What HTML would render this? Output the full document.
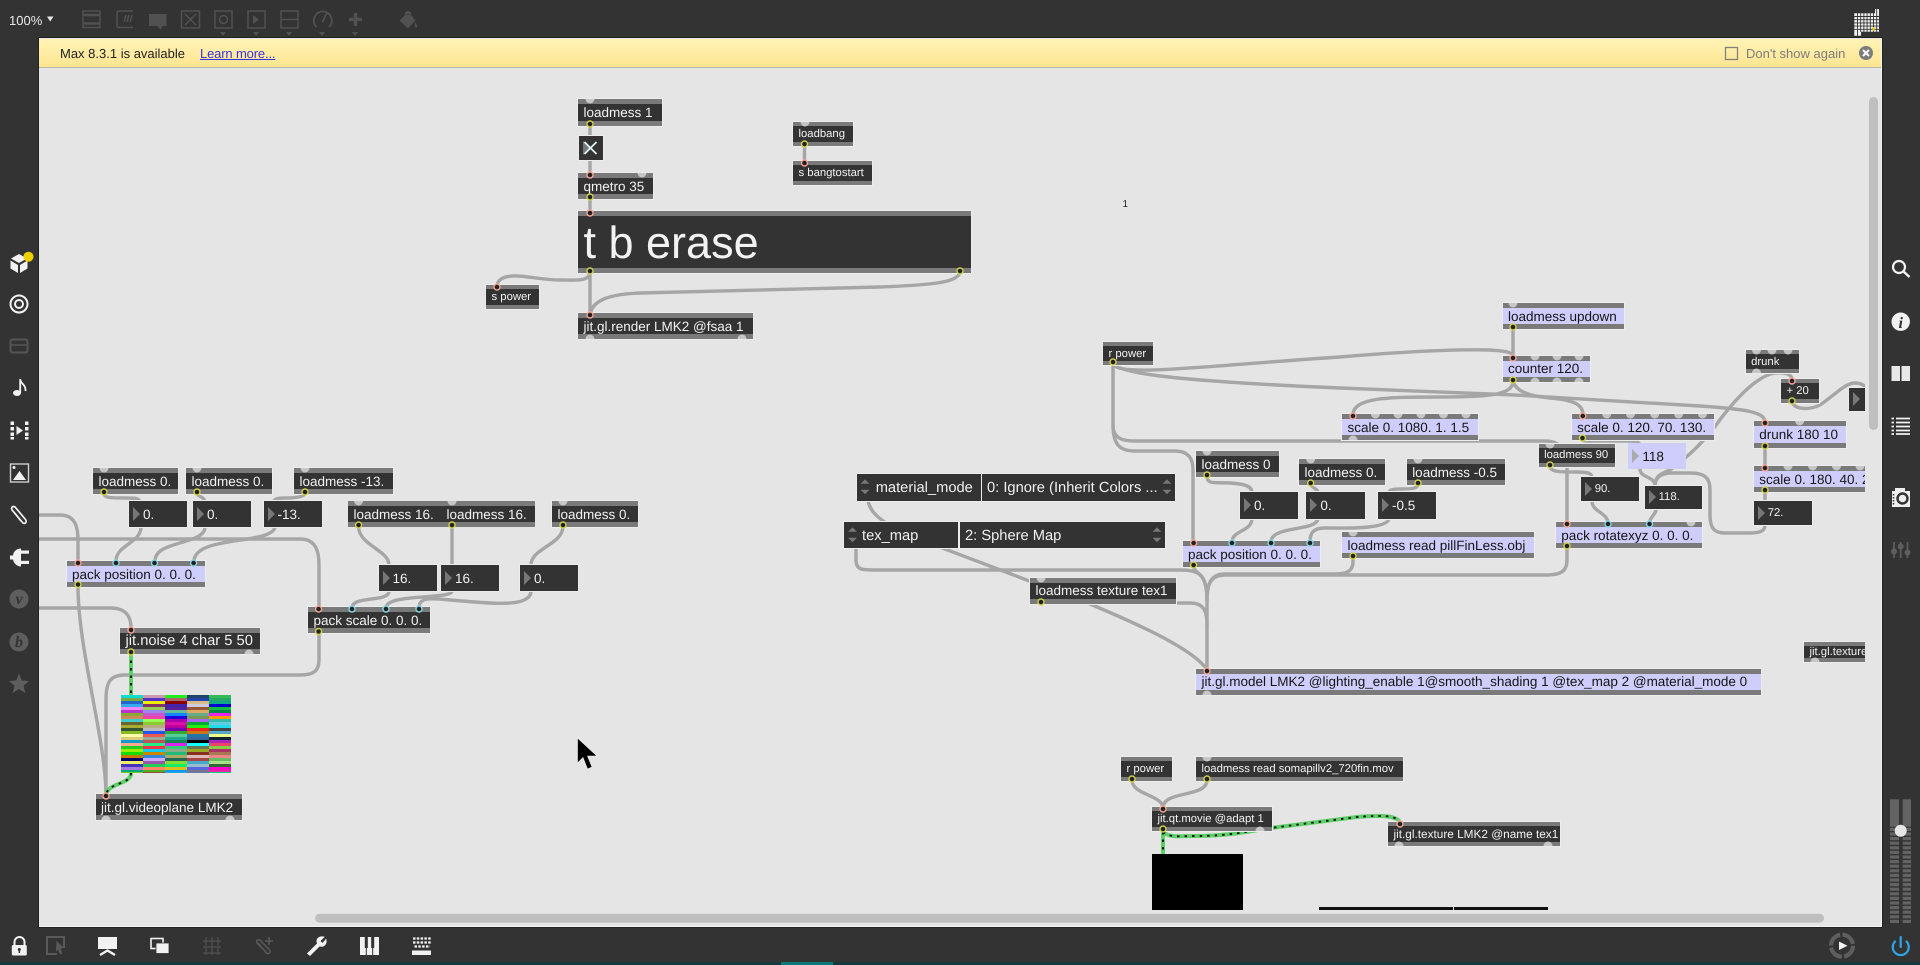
<!DOCTYPE html>
<html><head><meta charset="utf-8"><title>Max patcher</title>
<style>
html,body{margin:0;padding:0;width:1920px;height:965px;overflow:hidden;background:#333;font-family:"Liberation Sans",Arial,sans-serif;text-rendering:geometricPrecision}
#pat{position:absolute;left:39px;top:38px;width:1842px;height:888px;background:#e5e5e5;border-right:1px solid #f4f4f4;border-bottom:1px solid #f4f4f4;box-shadow:0 0 0 1px #222}
#bar{position:absolute;left:39px;top:39px;width:1842px;height:28px;background:linear-gradient(#fff3b6,#fde590);border-bottom:1px solid #b9b9a8;font-size:13px;color:#222;line-height:28px}
#bar span{position:absolute;top:1px;white-space:nowrap}
#clip{position:absolute;left:0;top:0;width:1920px;height:965px;clip-path:inset(68px 55px 55px 39px)}
svg.l{position:absolute;left:0;top:0;width:1920px;height:965px;overflow:visible}
.o,.n,.u{position:absolute;box-sizing:border-box;background:#333;color:#f2f2f2;white-space:nowrap;overflow:hidden;display:flex;align-items:center;box-shadow:0 0 0 1px #ececec;font-size:13.5px}
.o{border-top:5px solid #7a7a7a;border-bottom:5px solid #7a7a7a;padding-left:5.5px}
.s{font-size:11.3px;border-top-width:4.5px;border-bottom-width:4.5px}
.v{background:#cfcdfb;color:#151515}
.n{padding-left:14px}
.n::before{content:"";position:absolute;left:4px;top:50%;margin-top:-7px;border-left:7.5px solid #777;border-top:7px solid transparent;border-bottom:7px solid transparent}
.n.v::before{border-left-color:#aaa}
.u{font-size:14.7px}
.u b{font-weight:normal;position:absolute;margin-top:2px}
.w{fill:none;stroke:#a6a6a6;stroke-width:3.4;stroke-linecap:round}
.gb{fill:none;stroke:#5fd068;stroke-width:4}
.gd{fill:none;stroke:#111;stroke-width:1.9;stroke-dasharray:2.5 5}
#noise{position:absolute;left:120.5px;top:695px;width:110.5px;height:77.5px;display:grid;grid-template-columns:repeat(5,1fr);grid-template-rows:repeat(26,1fr)}
#noise i{display:block}
</style></head><body>
<div id="pat"></div>
<div id="bar"><span style="left:21px">Max 8.3.1 is available</span><span style="left:161px;color:#3a32e0;text-decoration:underline;letter-spacing:-.15px">Learn more...</span><span style="left:1707px;color:#7c7c7c">Don't show again</span></div>

<div id="clip">
<svg class="l">
<g class="w">
<path d="M590 126V173M590 199V211M804.5 146V161"/>
<path d="M590 272C590 282 575 280 560 280C540 280 525 275 512 276C502 277 497 280 497 287"/>
<path d="M590 272V314"/>
<path d="M960 272C958 283 930 285 880 287L640 293C610 294 592 300 590 315"/>
<path d="M104 493C104 498 110 498 125 498C136 498 140 498 140 503"/>
<path d="M197 493C197 497 205 496 205 503"/>
<path d="M305 493C305 497 295 498 285 498C277 498 274 499 273 503"/>
<path d="M141 527C141 543 116 545 116 561"/>
<path d="M205 527C205 545 155 540 155 561"/>
<path d="M275 527C272 545 195 535 194 561"/>
<path d="M30 515L60 515C74 515 78 525 78 540L78 561"/>
<path d="M30 539L300 539C315 539 319 550 319 565L319 607"/>
<path d="M30 608L110 608C125 608 131 615 131 628"/>
<path d="M358.600 526C358 545 389 550 389 565"/>
<path d="M452 526V565"/>
<path d="M563 526C563 545 531 548 531 565"/>
<path d="M389 591C389 603 352 595 352 608"/>
<path d="M452 591C452 600 386 593 386 608"/>
<path d="M531 591C531 610 480 602 450 600C430 598 419 597 419 608"/>
<path d="M319 632L319 660C319 672 312 675 300 675L125 675C110 675 106 682 106 700L106 795"/>
<path d="M78 586C78 650 106 740 106 796"/>
<path d="M1113 363C1115 378 1200 366 1340 357C1400 352 1450 349 1490 350C1505 351 1513 352 1513 357"/>
<path d="M1113 363C1118 375 1200 382 1340 388L1515 395L1700 406C1745 409 1765 412 1765 422"/>
<path d="M1113 363L1113 425C1113 437 1120 441 1135 441L1545 441C1560 441 1567 450 1567 465L1567 523"/>
<path d="M1113 425C1113 445 1120 451 1135 451L1175 451C1188 451 1193 458 1193 470L1193 542"/>
<path d="M1207 476C1207 485 1215 482 1230 483C1245 484 1252 486 1252 493"/>
<path d="M1310.700 484C1311 488 1318 488 1318 493"/>
<path d="M1418 484C1418 489 1410 489 1400 489C1392 489 1389 490 1389 493"/>
<path d="M1252 518C1252 532 1232 530 1232 542"/>
<path d="M1318 518C1318 532 1271 525 1271 542"/>
<path d="M1389 518C1389 530 1340 528 1325 528C1314 528 1310 532 1310 542"/>
<path d="M1193.600 566C1194 575 1207 570 1207 600L1207 670"/>
<path d="M856 548L856 560C856 570 862 570 875 570L1180 570C1200 570 1207 575 1207 600"/>
<path d="M868 500C870 515 885 522 900 532L1090 604C1140 625 1195 650 1207 670"/>
<path d="M1041 603L1190 603C1203 603 1207 610 1207 625"/>
<path d="M1353 557L1353 562C1353 572 1345 574 1335 574L1225 574C1212 574 1207 582 1207 600"/>
<path d="M1567 547L1567 560C1567 572 1560 575 1545 575L1225 575C1212 575 1207 582 1207 600"/>
<path d="M1513 328V356"/>
<path d="M1513 381C1513 395 1490 397 1440 397C1390 397 1353 397 1353 415"/>
<path d="M1513 381C1516 392 1530 396 1550 398C1575 400 1583 405 1583 415"/>
<path d="M1582 439C1582 442 1590 441 1600 441L1630 441C1638 441 1640 443 1640 446"/>
<path d="M1640 469C1640 478 1655 476 1655 486"/>
<path d="M1765 525C1765 531 1760 533 1750 533L1725 533C1714 533 1710 528 1710 515L1710 490C1710 478 1705 473 1690 473L1672 473C1660 473 1655 478 1655 486"/>
<path d="M1792 380C1792 374 1785 372 1775 373C1755 376 1730 405 1714 428C1700 445 1690 455 1670 470C1660 474 1655 476 1655 486"/>
<path d="M1656 509C1656 515 1650 516 1649.500 523"/>
<path d="M1550 466C1550 472 1560 472 1575 472C1588 472 1592 473 1592 478"/>
<path d="M1592 501C1592 512 1607 512 1608 523"/>
<path d="M1765 447V467M1765 491V501"/>
<path d="M1792 402C1795 410 1810 410 1820 405C1835 395 1845 383 1855 383C1862 383 1865 386 1865 388"/>
<path d="M1132 780C1132 795 1163 795 1163 808"/>
<path d="M1207 780C1207 798 1163 790 1163 808"/>
</g>
<g>
<path class="gb" d="M131 653V695M131 773C131 785 108 782 106 795"/><path class="gd" d="M131 653V695M131 773C131 785 108 782 106 795"/>
<path class="gb" d="M1163 832V856M1163 832C1170 838 1180 836 1195 836C1230 836 1250 831 1271 828L1357 817C1380 815 1398 815 1400 823"/>
<path class="gd" d="M1163 832V856M1163 832C1170 838 1180 836 1195 836C1230 836 1250 831 1271 828L1357 817C1380 815 1398 815 1400 823"/>
</g>
</svg>

<div class="o" style="left:578px;top:99px;width:84px;height:27px">loadmess 1</div>
<div class="n" style="left:578.500px;top:136px;width:24px;height:24px;padding:0"></div>
<div class="o" style="left:578px;top:173px;width:75px;height:26px">qmetro 35</div>
<div class="o" style="left:578px;top:211px;width:393px;height:62px;font-size:45px;padding-top:2px">t b erase</div>
<div class="o s" style="left:793px;top:122px;width:60px;height:24px">loadbang</div>
<div class="o s" style="left:793px;top:161px;width:79px;height:24px">s bangtostart</div>
<div class="o s" style="left:486px;top:285px;width:53px;height:24px">s power</div>
<div class="o" style="left:578px;top:313px;width:175px;height:26px">jit.gl.render LMK2 @fsaa 1</div>

<div class="o" style="left:93px;top:468px;width:85px;height:26px">loadmess 0.</div>
<div class="o" style="left:186px;top:468px;width:86px;height:26px">loadmess 0.</div>
<div class="o" style="left:294px;top:468px;width:99px;height:26px">loadmess -13.</div>
<div class="n" style="left:129px;top:501px;width:58px;height:26px">0.</div>
<div class="n" style="left:193px;top:501px;width:58px;height:26px">0.</div>
<div class="n" style="left:263.500px;top:501px;width:58px;height:26px">-13.</div>
<div class="o" style="left:348px;top:501px;width:94px;height:26px;box-shadow:none">loadmess 16.</div>
<div class="o" style="left:441px;top:501px;width:94px;height:26px;box-shadow:none">loadmess 16.</div>
<div class="o" style="left:552px;top:501px;width:86px;height:26px">loadmess 0.</div>
<div class="o v" style="left:66.500px;top:561px;width:138px;height:26px">pack position 0. 0. 0.</div>
<div class="n" style="left:378.500px;top:565px;width:58px;height:26px">16.</div>
<div class="n" style="left:441px;top:565px;width:58px;height:26px">16.</div>
<div class="n" style="left:520px;top:565px;width:58px;height:26px">0.</div>
<div class="o" style="left:308px;top:607px;width:122px;height:26px">pack scale 0. 0. 0.</div>
<div class="o" style="left:120px;top:628px;width:140px;height:26px;font-size:14.700px">jit.noise 4 char 5 50</div>
<div class="o" style="left:95.500px;top:794px;width:146px;height:26px">jit.gl.videoplane LMK2</div>

<div id="noise">
<i style="background:#1dc"></i><i style="background:#c9a"></i><i style="background:#2e2"></i><i style="background:#246"></i><i style="background:#3b5"></i>
<i style="background:#7a4"></i><i style="background:#53c"></i><i style="background:#a66"></i><i style="background:#24a"></i><i style="background:#2a6"></i>
<i style="background:#26c"></i><i style="background:#ee0"></i><i style="background:#800"></i><i style="background:#db8"></i><i style="background:#1a8"></i>
<i style="background:#3ae"></i><i style="background:#836"></i><i style="background:#42a"></i><i style="background:#ccd"></i><i style="background:#00c"></i>
<i style="background:#e8f"></i><i style="background:#9c5"></i><i style="background:#529"></i><i style="background:#953"></i><i style="background:#1b4"></i>
<i style="background:#b3c"></i><i style="background:#98e"></i><i style="background:#6b9"></i><i style="background:#da6"></i><i style="background:#084"></i>
<i style="background:#8a3"></i><i style="background:#c5c"></i><i style="background:#18f"></i><i style="background:#6a8"></i><i style="background:#e2e"></i>
<i style="background:#c85"></i><i style="background:#e4a"></i><i style="background:#20d"></i><i style="background:#795"></i><i style="background:#f90"></i>
<i style="background:#4cc"></i><i style="background:#9f5"></i><i style="background:#a0a"></i><i style="background:#a6e"></i><i style="background:#3ba"></i>
<i style="background:#663"></i><i style="background:#8c3"></i><i style="background:#d1a"></i><i style="background:#0a3"></i><i style="background:#6cd"></i>
<i style="background:#aa3"></i><i style="background:#ba8"></i><i style="background:#b09"></i><i style="background:#2e1"></i><i style="background:#2de"></i>
<i style="background:#353"></i><i style="background:#bbb"></i><i style="background:#70a"></i><i style="background:#e22"></i><i style="background:#444"></i>
<i style="background:#8b2"></i><i style="background:#25e"></i><i style="background:#3a3"></i><i style="background:#c71"></i><i style="background:#5ac"></i>
<i style="background:#ffa"></i><i style="background:#e55"></i><i style="background:#5c9"></i><i style="background:#27a"></i><i style="background:#ef8"></i>
<i style="background:#dc7"></i><i style="background:#9a9"></i><i style="background:#2a8"></i><i style="background:#369"></i><i style="background:#123"></i>
<i style="background:#19c"></i><i style="background:#b55"></i><i style="background:#185"></i><i style="background:#000"></i><i style="background:#a2b"></i>
<i style="background:#fa8"></i><i style="background:#2e8"></i><i style="background:#d2e"></i><i style="background:#1ff"></i><i style="background:#e46"></i>
<i style="background:#2c2"></i><i style="background:#e34"></i><i style="background:#3c7"></i><i style="background:#675"></i><i style="background:#8c4"></i>
<i style="background:#9e0"></i><i style="background:#1ce"></i><i style="background:#8a8"></i><i style="background:#9a2"></i><i style="background:#a36"></i>
<i style="background:#1d0"></i><i style="background:#c80"></i><i style="background:#2b7"></i><i style="background:#832"></i><i style="background:#a75"></i>
<i style="background:#c70"></i><i style="background:#38d"></i><i style="background:#aa6"></i><i style="background:#dbb"></i><i style="background:#e88"></i>
<i style="background:#006"></i><i style="background:#caf"></i><i style="background:#265"></i><i style="background:#a44"></i><i style="background:#6b6"></i>
<i style="background:#ee6"></i><i style="background:#95a"></i><i style="background:#8d3"></i><i style="background:#4ac"></i><i style="background:#ad8"></i>
<i style="background:#43b"></i><i style="background:#2c5"></i><i style="background:#1e6"></i><i style="background:#9bc"></i><i style="background:#363"></i>
<i style="background:#a7d"></i><i style="background:#f86"></i><i style="background:#db2"></i><i style="background:#56d"></i><i style="background:#f0c"></i>
<i style="background:#0a7"></i><i style="background:#5a2"></i><i style="background:#19e"></i><i style="background:#778"></i><i style="background:#e2a"></i>
<i style="background:#9e4"></i><i style="background:#e7b"></i><i style="background:#3ce"></i><i style="background:#86b"></i><i style="background:#fe5"></i>
<i style="background:#7c2"></i><i style="background:#853"></i><i style="background:#2ad"></i><i style="background:#67a"></i><i style="background:#0d7"></i>
</div>

<div class="o s" style="left:1103px;top:342px;width:50px;height:23px">r power</div>
<div class="o v" style="left:1502.500px;top:303px;width:121.500px;height:26px">loadmess updown</div>
<div class="o v" style="left:1502.500px;top:355.700px;width:87.500px;height:26px">counter 120.</div>
<div class="o v" style="left:1342px;top:414px;width:135.500px;height:26px">scale 0. 1080. 1. 1.5</div>
<div class="o v" style="left:1571.600px;top:414px;width:142.400px;height:26px">scale 0. 120. 70. 130.</div>
<div class="o s" style="left:1538.600px;top:443.700px;width:76.400px;height:23.300px">loadmess 90</div>
<div class="n v" style="left:1628.400px;top:443px;width:57.600px;height:26px;box-shadow:none">118</div>
<div class="o s" style="left:1745.600px;top:350px;width:53.400px;height:23px">drunk</div>
<div class="o s" style="left:1781px;top:379px;width:38px;height:24px">+ 20</div>
<div class="n" style="left:1849px;top:387.700px;width:58px;height:23.300px"></div>
<div class="o v" style="left:1753.700px;top:421px;width:92.300px;height:26.700px">drunk 180 10</div>
<div class="o v" style="left:1753.700px;top:466px;width:140px;height:26px">scale 0. 180. 40. 250.</div>
<div class="n" style="left:1753.700px;top:501px;width:57.900px;height:24px;font-size:11.300px">72.</div>
<div class="o" style="left:1196px;top:451px;width:83px;height:26px">loadmess 0</div>
<div class="o" style="left:1299px;top:459px;width:86px;height:26px">loadmess 0.</div>
<div class="o" style="left:1406.700px;top:459.300px;width:98.300px;height:25.700px">loadmess -0.5</div>
<div class="n" style="left:1240px;top:492px;width:58px;height:26.700px">0.</div>
<div class="n" style="left:1306.400px;top:492px;width:58.200px;height:26.700px">0.</div>
<div class="n" style="left:1378px;top:492px;width:58px;height:26.700px">-0.5</div>
<div class="n" style="left:1580.700px;top:477px;width:57.900px;height:24px;font-size:11.300px">90.</div>
<div class="n" style="left:1644.600px;top:485.700px;width:57.400px;height:23.300px;font-size:11.300px">118.</div>
<div class="o v" style="left:1555.800px;top:522px;width:146.200px;height:26px">pack rotatexyz 0. 0. 0.</div>
<div class="o v" style="left:1182.500px;top:541px;width:137.500px;height:26px">pack position 0. 0. 0.</div>
<div class="o v" style="left:1342px;top:532px;width:192px;height:26px">loadmess read pillFinLess.obj</div>
<div class="o" style="left:1030px;top:577.700px;width:146px;height:26px">loadmess texture tex1</div>
<div class="o v" style="left:1196px;top:668.700px;width:565px;height:26px">jit.gl.model LMK2 @lighting_enable 1@smooth_shading 1 @tex_map 2 @material_mode 0</div>
<div class="o s" style="left:1804px;top:642px;width:80px;height:20px">jit.gl.texture</div>
<div class="o s" style="left:1121px;top:757px;width:51px;height:24px">r power</div>
<div class="o s" style="left:1196px;top:757px;width:206.700px;height:24px">loadmess read somapillv2_720fin.mov</div>
<div class="o s" style="left:1152px;top:807.300px;width:119.700px;height:23.700px">jit.qt.movie @adapt 1</div>
<div class="o s" style="left:1388px;top:822px;width:172px;height:24px;font-size:11.800px">jit.gl.texture LMK2 @name tex1</div>

<div class="u" style="left:857px;top:474px;width:124px;height:26.700px"><b style="left:18.700px">material_mode</b></div>
<div class="u" style="left:982px;top:474px;width:193px;height:26.700px"><b style="left:5px">0: Ignore (Inherit Colors ...</b></div>
<div class="u" style="left:844px;top:522px;width:114px;height:26px"><b style="left:18px">tex_map</b></div>
<div class="u" style="left:959.600px;top:522px;width:205px;height:26px"><b style="left:5.400px">2: Sphere Map</b></div>

<div style="position:absolute;left:1152px;top:854px;width:91px;height:56px;background:#000"></div>
<div style="position:absolute;left:1319px;top:906.700px;width:134px;height:3px;background:#111"></div>
<div style="position:absolute;left:1454px;top:906.700px;width:93.700px;height:3px;background:#111"></div>
<div style="position:absolute;left:1122.500px;top:199px;font-size:10px;color:#222">1</div>

<svg class="l">
<defs>
<path id="a" d="M-4.500 0a4.500 4.500 0 0 0 9 0z" fill="#c6c6c6"/>
<path id="b" d="M-4.500 0a4.500 4.500 0 0 1 9 0z" fill="#c6c6c6"/>
<circle id="i" r="3" fill="#222" stroke="#f5a595" stroke-width="1.400"/>
<circle id="y" r="3" fill="#222" stroke="#cfd24a" stroke-width="1.400"/>
<circle id="c" r="3" fill="#222" stroke="#86d6e6" stroke-width="1.400"/>
<path id="t" d="M-5.500 -6.500L0 -12L5.500 -6.500ZM-5.500 1L0 6.500L5.500 1Z" fill="#777" transform="scale(.8)"/>
</defs>
<path d="M584.500 142L596.500 154M596.500 142L584.500 154" stroke="#dff5f5" stroke-width="1.800" fill="none"/>
<path d="M577.500 738V763L583 757.500L587.500 769L592 767L587.500 756L597 756Z" fill="#000" stroke="#eee" stroke-width=".6"/>
<!-- umenu arrows -->
<use href="#t" x="865" y="489"/><use href="#t" x="1167" y="489"/><use href="#t" x="852.500" y="537"/><use href="#t" x="1157" y="537"/>
<!-- gray ports top -->
<use href="#a" x="590" y="99"/><use href="#a" x="642" y="173"/><use href="#a" x="805" y="122"/>
<use href="#a" x="104" y="468"/><use href="#a" x="197" y="468"/><use href="#a" x="305" y="468"/>
<use href="#a" x="358.600" y="501"/><use href="#a" x="452" y="501"/><use href="#a" x="563" y="501"/>
<use href="#a" x="1513" y="303"/><use href="#a" x="1535" y="356"/><use href="#a" x="1557" y="356"/><use href="#a" x="1579" y="356"/>
<use href="#a" x="1375.400" y="414"/><use href="#a" x="1398" y="414"/><use href="#a" x="1421" y="414"/><use href="#a" x="1443.500" y="414"/><use href="#a" x="1466" y="414"/>
<use href="#a" x="1606.700" y="414"/><use href="#a" x="1630.500" y="414"/><use href="#a" x="1654.700" y="414"/><use href="#a" x="1678.600" y="414"/><use href="#a" x="1702.500" y="414"/>
<use href="#a" x="1550" y="444"/><use href="#a" x="1756.500" y="350"/><use href="#a" x="1772" y="350"/><use href="#a" x="1788" y="350"/>
<use href="#a" x="1799.600" y="421"/><use href="#a" x="1788" y="466"/><use href="#a" x="1812.600" y="466"/><use href="#a" x="1836.500" y="466"/><use href="#a" x="1860" y="466"/>
<use href="#a" x="1207" y="451"/><use href="#a" x="1310.700" y="459"/><use href="#a" x="1418" y="459"/><use href="#a" x="1353" y="532"/><use href="#a" x="1691" y="522"/><use href="#a" x="1041" y="578"/><use href="#a" x="1207" y="757"/>
<!-- gray ports bottom -->
<use href="#b" x="590" y="339"/><use href="#b" x="742" y="339"/><use href="#b" x="249" y="654"/><use href="#b" x="106" y="820"/><use href="#b" x="230" y="820"/>
<use href="#b" x="1535" y="382"/><use href="#b" x="1557" y="382"/><use href="#b" x="1579" y="382"/><use href="#b" x="1353" y="440"/><use href="#b" x="1756.500" y="373"/>
<use href="#b" x="1207" y="695"/><use href="#b" x="1260" y="831"/><use href="#b" x="1399" y="846"/><use href="#b" x="1548" y="846"/><use href="#b" x="1815" y="662"/>
<!-- hot inlets -->
<use href="#i" x="590" y="175"/><use href="#i" x="590" y="213"/><use href="#i" x="804.500" y="163"/><use href="#i" x="497" y="287"/><use href="#i" x="590" y="315"/>
<use href="#i" x="78" y="563"/><use href="#i" x="318.600" y="609"/><use href="#i" x="131" y="630"/><use href="#i" x="106" y="796"/>
<use href="#i" x="1513" y="358"/><use href="#i" x="1353" y="416"/><use href="#i" x="1582.800" y="416"/><use href="#i" x="1792" y="381"/><use href="#i" x="1765" y="423"/><use href="#i" x="1765" y="468"/>
<use href="#i" x="1193.600" y="543"/><use href="#i" x="1567" y="524"/><use href="#i" x="1207" y="671"/><use href="#i" x="1163" y="809"/><use href="#i" x="1400" y="824"/>
<!-- cold inlets -->
<use href="#c" x="116" y="563"/><use href="#c" x="154.500" y="563"/><use href="#c" x="193.600" y="563"/>
<use href="#c" x="352" y="609"/><use href="#c" x="386" y="609"/><use href="#c" x="419" y="609"/>
<use href="#c" x="1232" y="543"/><use href="#c" x="1271" y="543"/><use href="#c" x="1310" y="543"/><use href="#c" x="1608" y="524"/><use href="#c" x="1649.500" y="524"/>
<!-- outlets -->
<use href="#y" x="590" y="124"/><use href="#y" x="590" y="197"/><use href="#y" x="590" y="271"/><use href="#y" x="960" y="271"/><use href="#y" x="804.500" y="144"/>
<use href="#y" x="104" y="492"/><use href="#y" x="197" y="492"/><use href="#y" x="305" y="492"/><use href="#y" x="358.600" y="525"/><use href="#y" x="452" y="525"/><use href="#y" x="563" y="525"/>
<use href="#y" x="78" y="584.500"/><use href="#y" x="318.600" y="631.500"/><use href="#y" x="131" y="652"/>
<use href="#y" x="1113" y="362"/><use href="#y" x="1513" y="327"/><use href="#y" x="1513" y="380"/><use href="#y" x="1582.500" y="438"/><use href="#y" x="1550" y="465"/><use href="#y" x="1792" y="401"/><use href="#y" x="1765" y="446"/><use href="#y" x="1765" y="490"/>
<use href="#y" x="1207" y="475"/><use href="#y" x="1310.700" y="483"/><use href="#y" x="1418" y="483"/><use href="#y" x="1193.600" y="565"/><use href="#y" x="1353" y="556"/><use href="#y" x="1567" y="546"/><use href="#y" x="1041" y="602"/>
<use href="#y" x="1132" y="779"/><use href="#y" x="1207" y="779"/><use href="#y" x="1163" y="829"/>
</svg>
</div>

<svg class="l" style="pointer-events:none">
<!-- scrollbars -->
<rect x="1869" y="97" width="9" height="333" rx="4.500" fill="#bfbfbf"/>
<rect x="315" y="913.700" width="1509" height="9" rx="4.500" fill="#bfbfbf"/>
<!-- yellow bar right -->
<rect x="1725.500" y="47.500" width="12" height="12" fill="none" stroke="#808080" stroke-width="1.300"/>
<circle cx="1866" cy="53" r="7" fill="#7c7c7c"/><path d="M1863 50L1869 56M1869 50L1863 56" stroke="#fff" stroke-width="2"/>
<!-- top toolbar -->
<text x="9" y="25" font-size="13" fill="#e8e8e8" font-family="Liberation Sans">100%</text>
<path d="M47 16.500H53.500L50.200 21.500Z" fill="#e8e8e8"/>
<g fill="none" stroke="#515151" stroke-width="1.500">
<rect x="83" y="11" width="17" height="16.500"/><path d="M83 15H100M83 23.500H100" stroke-width="2.500"/>
<path d="M133 11H119Q117 11 117 13V25Q117 27.500 119 27.500H133M124 22L126 15M127 22L129 15M130 22L132 15" stroke-width="1.500"/>
<rect x="181.500" y="11" width="18" height="17"/><path d="M185 14L196 25M196 14L185 25"/>
<rect x="215" y="11" width="17" height="17"/><circle cx="223.500" cy="19.500" r="4"/>
<rect x="248" y="11" width="17" height="17"/>
<rect x="281" y="11" width="17" height="17"/><path d="M281 19.500H298"/>
<path d="M316.500 27A9 9 0 1 1 329 27M322.500 22L327 12.500" stroke-width="1.800"/>
<path d="M355.500 13V26M349 19.500H362" stroke-width="3.500"/>
</g>
<path d="M253 15L259 19.500L253 24Z" fill="#515151"/>
<path d="M149 14H166.500V26H162L161 30L157 26H149Z" fill="#515151"/>
<path d="M399.500 20.500L405 15V12.500Q408 9.500 411 12.500V15L415.500 20.500L408 28.500ZM406.500 15L408 13.500L409.500 15Z" fill="#515151" fill-rule="evenodd"/><path d="M415.500 22.500q3 3.500 .5 5.500q-2.500-2 -.5-5.500" fill="#515151"/>
<g fill="#515151"><path d="M220 32H226L223 36ZM253 32H259L256 36ZM286 32H292L289 36ZM319 32H325L322 36ZM352 32H358L355 36Z"/></g>
<!-- meter grid -->
<path d="M1854.300 13.300H1875V9H1879V31.700H1861V35.700H1854.300Z" fill="#f2f2f2"/>
<path d="M1857.500 13V36M1860.700 13V32M1863.900 13V32M1867.100 13V32M1870.300 13V32M1873.500 13V32M1876.700 9V32M1854 16.500H1879M1854 19.700H1879M1854 22.900H1879M1854 26.100H1879M1854 29.300H1879" stroke="#333" stroke-width=".9"/>
<rect x="1872.500" y="27" width="2" height="4" fill="#e8c800"/>
<!-- left sidebar -->
<path d="M19 254L27 258.500L19 263L11 258.500Z" fill="#f2f2f2"/><path d="M10.500 260.500L18 265V273L10.500 268.500ZM27.500 260.500L20 265V273L27.500 268.500Z" fill="#f2f2f2"/>
<circle cx="28.500" cy="256.700" r="5" fill="#f0d000"/>
<circle cx="19" cy="304" r="8.500" fill="none" stroke="#f2f2f2" stroke-width="2"/><circle cx="19" cy="304" r="4" fill="none" stroke="#f2f2f2" stroke-width="2"/>
<rect x="10.500" y="339.500" width="17" height="13" rx="2" fill="none" stroke="#555" stroke-width="2"/><path d="M10 345H28" stroke="#555" stroke-width="1.500"/>
<ellipse cx="17" cy="393" rx="4" ry="3" fill="#f2f2f2"/><path d="M20.200 393V379C20.200 384 26 384 25.500 391" fill="none" stroke="#f2f2f2" stroke-width="1.800"/>
<path d="M10.500 421.500h3.500v3.500h-3.500zM10.500 427h3.500v3.500h-3.500zM10.500 432.500h3.500v3.500h-3.500zM10.500 437h3.500v2.500h-3.500zM25 421.500h3.500v3.500h-3.500zM25 427h3.500v3.500h-3.500zM25 432.500h3.500v3.500h-3.500zM25 437h3.500v2.500h-3.500zM16.500 426L23 430.500L16.500 435Z" fill="#f2f2f2"/>
<rect x="10.500" y="464" width="18" height="18" fill="none" stroke="#cfcfcf" stroke-width="1.400"/><circle cx="14" cy="467.500" r="1.500" fill="#f2f2f2"/><path d="M13 480L19.500 471L26 480Z" fill="#f2f2f2"/>
<path d="M13.500 511.500L22.500 522.500C24.500 525 27.500 522 25.500 519.500L15.500 507.500C13.500 505 10 507.500 12.500 510.500L21 521" fill="none" stroke="#f2f2f2" stroke-width="1.700"/>
<path d="M10 555.500H13C13.500 551 17 548.500 21 548.500V566.500C17 566.500 13.500 563 13 559.500H10Z" fill="#f2f2f2"/><rect x="21" y="550.500" width="8" height="3.200" fill="#f2f2f2"/><rect x="21" y="560.800" width="8" height="3.200" fill="#f2f2f2"/>
<circle cx="19" cy="599" r="9.500" fill="#5e5e5e"/><text x="19" y="604" font-family="Liberation Serif" font-style="italic" font-weight="bold" font-size="16" fill="#333" text-anchor="middle">v</text>
<circle cx="19" cy="642" r="9.500" fill="#5e5e5e"/><text x="19" y="647" font-family="Liberation Serif" font-style="italic" font-weight="bold" font-size="16" fill="#333" text-anchor="middle">b</text>
<path d="M19 673.500L21.800 680.500L29 681L23.500 685.800L25.300 693L19 689L12.700 693L14.500 685.800L9 681L16.200 680.500Z" fill="#5e5e5e"/>
<!-- right sidebar -->
<circle cx="1899" cy="267" r="6" fill="none" stroke="#f2f2f2" stroke-width="2.200"/><path d="M1903.500 271.500L1909.500 277" stroke="#f2f2f2" stroke-width="2.400"/>
<circle cx="1900.700" cy="321.700" r="9.200" fill="#f2f2f2"/><text x="1900.700" y="328" font-family="Liberation Serif" font-style="italic" font-weight="bold" font-size="16" fill="#333" text-anchor="middle">i</text>
<rect x="1891.500" y="366" width="8.500" height="15" fill="#e8e8e8"/><rect x="1901.500" y="366" width="8.500" height="15" fill="#e8e8e8"/>
<path d="M1896 418.500H1910M1896 422.500H1910M1896 426.500H1910M1896 430.500H1910M1896 434H1910" stroke="#f2f2f2" stroke-width="1.800"/><path d="M1891.500 418.500H1894M1891.500 422.500H1894M1891.500 426.500H1894M1891.500 430.500H1894M1891.500 434H1894" stroke="#f2f2f2" stroke-width="1.800"/>
<path d="M1892 491H1895V488H1905V491H1910V507H1892Z" fill="#efefef"/><circle cx="1902.500" cy="498.500" r="5" fill="none" stroke="#333" stroke-width="2.400"/><path d="M1893.500 494V505" stroke="#333" stroke-width="1.500" stroke-dasharray="1.500 1.500"/>
<g stroke="#5e5e5e" stroke-width="1.800"><path d="M1894 542V558M1900.700 542V558M1907.500 542V558"/></g><g fill="#5e5e5e"><circle cx="1894" cy="551.500" r="3"/><circle cx="1900.700" cy="546.500" r="3"/><circle cx="1907.500" cy="552.500" r="3"/></g>
<!-- bottom toolbar -->
<rect x="11.800" y="945" width="15" height="10.500" rx="1.500" fill="#f2f2f2"/><path d="M14.500 945V942A5 5 0 0 1 24.500 942V945" fill="none" stroke="#f2f2f2" stroke-width="2"/><circle cx="19.300" cy="949.500" r="1.500" fill="#333"/><rect x="18.600" y="950" width="1.500" height="3" fill="#333"/>
<path d="M57 954H47V937H64V948" fill="none" stroke="#5a5a5a" stroke-width="2"/><path d="M56.500 941L64 948L60.500 948.500L62.500 953.500L60 954.500L58 949.500L56 952Z" fill="#5a5a5a"/>
<rect x="98" y="937" width="19" height="12" fill="#f2f2f2"/><path d="M100 955L107.500 950.500L115 955" fill="none" stroke="#f2f2f2" stroke-width="2.400"/>
<rect x="151" y="938.500" width="12" height="10" fill="none" stroke="#f2f2f2" stroke-width="1.600"/><rect x="156" y="943" width="13" height="10.500" fill="#f2f2f2" stroke="#333" stroke-width=".8"/>
<path d="M206 937V955M212 937V955M218 937V955M203 941H221M203 947H221M203 953H221" stroke="#4f4f4f" stroke-width="1.300"/>
<path d="M258 943L266.500 953C268.500 955 271.500 952 269.500 950L260.500 940.500C258.500 938.500 255 941 257.500 943.500L266 952" fill="none" stroke="#5a5a5a" stroke-width="1.500"/><path d="M269 937V945M265 941H273" stroke="#5a5a5a" stroke-width="1.600"/>
<g transform="translate(-2,0)"><path d="M309.500 953.500L319.500 943.500C317.500 939 321 936 326 937L322 941L324.500 943.500L328 939.500C329 944 326 947.500 321.500 946L312 955.500Z" fill="#f2f2f2" stroke="#f2f2f2" stroke-width=".8"/></g>
<rect x="360" y="937" width="19" height="18" fill="#f2f2f2"/><path d="M366.300 937V955M372.700 937V955" stroke="#333" stroke-width="1"/><path d="M364.800 937h3v11h-3zM371.200 937h3v11h-3z" fill="#333"/>
<path d="M413 938.500H431M413 942.500H431M414.500 946.500H430" stroke="#f2f2f2" stroke-width="2.200" stroke-dasharray="2.500 1.300"/><rect x="412" y="950.500" width="19" height="4.500" fill="#f2f2f2"/>
<!-- meter -->
<rect x="1890" y="799.300" width="9" height="27.400" fill="#636363"/><rect x="1902.700" y="799.300" width="8.300" height="27.400" fill="#636363"/>
<path d="M1894.500 923V827" stroke="#636363" stroke-width="9" stroke-dasharray="3.200 1.400" fill="none"/>
<path d="M1906.850 923V827" stroke="#636363" stroke-width="8.300" stroke-dasharray="3.200 1.400" fill="none"/>
<circle cx="1900.700" cy="830.700" r="6" fill="#e6e6e6"/>
<circle cx="1842" cy="945.700" r="11" fill="none" stroke="#5e5e5e" stroke-width="4.200" stroke-dasharray="15 2.300"/><path d="M1839 941.500L1847.500 945.700L1839 950Z" fill="#f2f2f2"/>
<path d="M1895 941.500A8 8 0 1 0 1906.500 941.500M1900.700 937V947" fill="none" stroke="#2fa6ea" stroke-width="2.200" stroke-linecap="round"/>
<!-- teal strip -->
<rect x="0" y="962" width="1920" height="3" fill="#17383c"/><rect x="781" y="962" width="52" height="3" fill="#0c7a78"/>
</svg>
</body></html>
